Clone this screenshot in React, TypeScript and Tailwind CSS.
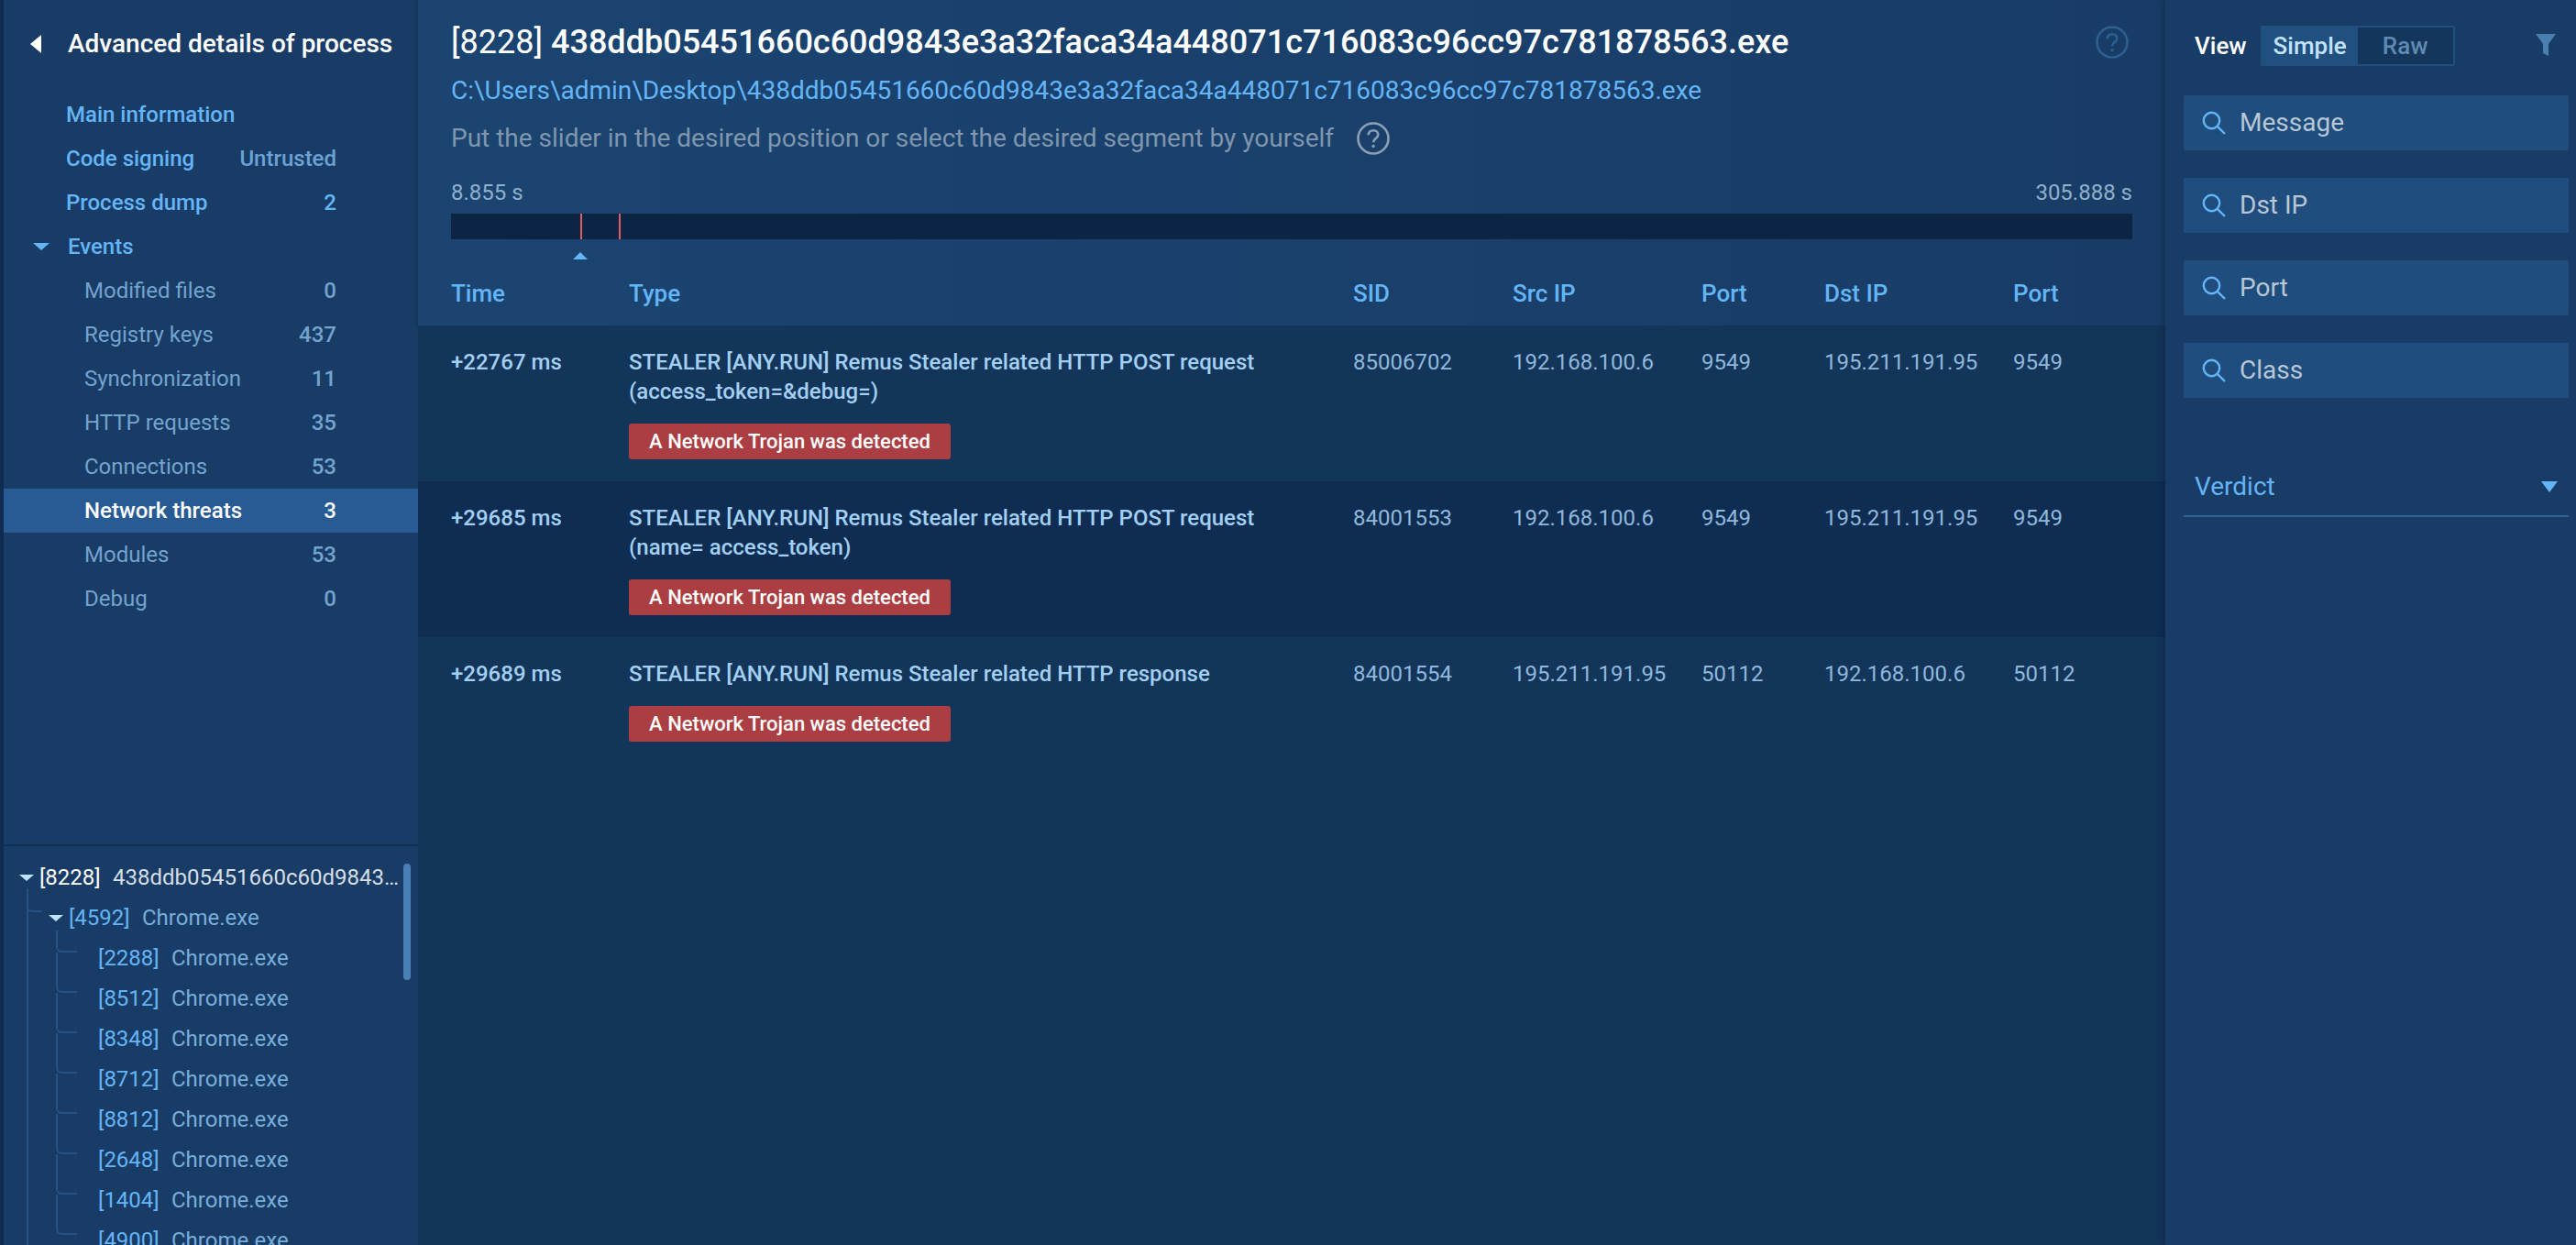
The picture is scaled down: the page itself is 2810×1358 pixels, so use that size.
const MAIN_ITEMS = [
  { label: "Main information", value: "" },
  { label: "Code signing", value: "Untrusted" },
  { label: "Process dump", value: "2" },
];

const EVENT_ITEMS = [
  { label: "Modified files", value: "0" },
  { label: "Registry keys", value: "437" },
  { label: "Synchronization", value: "11" },
  { label: "HTTP requests", value: "35" },
  { label: "Connections", value: "53" },
  { label: "Network threats", value: "3", active: true },
  { label: "Modules", value: "53" },
  { label: "Debug", value: "0" },
];

const CHILD_PIDS = ["2288", "8512", "8348", "8712", "8812", "2648", "1404", "4900"];

const COLUMNS = ["Time", "Type", "SID", "Src IP", "Port", "Dst IP", "Port"];

const THREATS = [
  {
    time: "+22767 ms",
    type: "STEALER [ANY.RUN] Remus Stealer related HTTP POST request (access_token=&debug=)",
    sid: "85006702",
    src: "192.168.100.6",
    srcPort: "9549",
    dst: "195.211.191.95",
    dstPort: "9549",
    rowClass: "h-[170px] bg-[#13355a]",
  },
  {
    time: "+29685 ms",
    type: "STEALER [ANY.RUN] Remus Stealer related HTTP POST request (name= access_token)",
    sid: "84001553",
    src: "192.168.100.6",
    srcPort: "9549",
    dst: "195.211.191.95",
    dstPort: "9549",
    rowClass: "h-[170px] bg-[#0f2d52]",
  },
  {
    time: "+29689 ms",
    type: "STEALER [ANY.RUN] Remus Stealer related HTTP response",
    sid: "84001554",
    src: "195.211.191.95",
    srcPort: "50112",
    dst: "192.168.100.6",
    dstPort: "50112",
    rowClass: "flex-1 bg-[#13355a]",
  },
];

const FILTERS = ["Message", "Dst IP", "Port", "Class"];

const GRID = "grid grid-cols-[194px_790px_174px_206px_134px_206px_1fr]";

function HelpIcon({ className }: { className: string }) {
  return (
    <svg viewBox="0 0 36 36" className={className} fill="none" stroke="currentColor">
      <circle cx="18" cy="18" r="16.5" strokeWidth="2.6" />
      <path d="M12.8 14.2c0-3 2.3-5 5.3-5s5.2 1.9 5.2 4.6c0 2-1 3.1-2.7 4.3-1.700 1.200-2.500 2.100-2.500 4.200" strokeWidth="2.600" />
      <circle cx="18.100" cy="26.500" r="1.700" fill="currentColor" stroke="none" />
    </svg>
  );
}

function SearchIcon() {
  return (
    <svg viewBox="0 0 26 26" className="h-[26px] w-[26px] shrink-0 text-[#64b5f6]" fill="none" stroke="currentColor" strokeWidth="2.400">
      <circle cx="10.500" cy="10.500" r="8.700" />
      <path d="M16.800 16.800 25 25" />
    </svg>
  );
}

function ChildRow({ pid, first }: { pid: string; first: boolean }) {
  return (
    <div className="relative flex h-[44px] items-center pl-[103px]">
      <span
        className={`absolute left-[57px] w-[23px] rounded-bl-[6px] border-b-2 border-l-2 border-[#255282] ${
          first ? "top-[-8px] h-[24px]" : "top-[-28px] h-[44px]"
        }`}
      />
      <span className="w-[80px] text-[#64b5f6]">[{pid}]</span>
      <span className="text-[#78aedb]">Chrome.exe</span>
    </div>
  );
}

function Sidebar() {
  return (
    <aside className="flex w-[456px] shrink-0 flex-col border-l-4 border-[#0e2b50] bg-[#193c66]">
      <div className="h-[923px] shrink-0 border-b-2 border-[#122f52]">
        <div className="flex h-[96px] items-center pl-[29px]">
          <span className="h-0 w-0 border-y-[10px] border-r-[12px] border-y-transparent border-r-white" />
          <span className="ml-[29px] text-[28px] font-medium text-white">Advanced details of process</span>
        </div>
        <div className="mt-[5px]">
          {MAIN_ITEMS.map((item) => (
            <div key={item.label} className="flex h-[48px] items-center justify-between pl-[68px] pr-[89px] text-[24px] font-medium text-[#64b5f6]">
              <span>{item.label}</span>
              <span className={item.value === "Untrusted" ? "text-[#6ba3d6]" : ""}>{item.value}</span>
            </div>
          ))}
          <div className="flex h-[48px] items-center pl-[32px] text-[24px] font-medium text-[#64b5f6]">
            <span className="h-0 w-0 border-x-[9px] border-t-[8px] border-x-transparent border-t-[#64b5f6]" />
            <span className="ml-[20px]">Events</span>
          </div>
          {EVENT_ITEMS.map((item) => (
            <div
              key={item.label}
              className={`flex h-[48px] items-center justify-between pl-[88px] pr-[89px] text-[24px] ${
                item.active ? "bg-[#285a94] font-medium text-white" : "text-[#73a3cf]"
              }`}
            >
              <span>{item.label}</span>
              <span className="font-medium">{item.value}</span>
            </div>
          ))}
        </div>
      </div>
      <div className="relative min-h-0 flex-1 overflow-hidden pt-[12px] text-[24px]">
        <span className="absolute left-[25px] top-[46px] h-full w-0 border-l-2 border-[#255282]" />
        <span className="absolute left-[25px] top-[50px] h-[22px] w-[17px] rounded-bl-[6px] border-b-2 border-l-2 border-[#255282]" />
        <span className="absolute right-[8px] top-[19px] h-[127px] w-[8px] rounded-full bg-[#4a7fb5]" />
        <div className="flex h-[44px] items-center pl-[17px]">
          <span className="h-0 w-0 border-x-[8px] border-t-[7px] border-x-transparent border-t-[#bfe3ff]" />
          <span className="ml-[6px] w-[80px] text-white">[8228]</span>
          <span className="w-[316px] truncate text-[#d5dfe8]">438ddb05451660c60d9843e3a32faca34a448071c716083c96cc97c781878563.exe</span>
        </div>
        <div className="flex h-[44px] items-center pl-[49px]">
          <span className="h-0 w-0 border-x-[8px] border-t-[7px] border-x-transparent border-t-[#bfe3ff]" />
          <span className="ml-[6px] w-[80px] text-[#64b5f6]">[4592]</span>
          <span className="text-[#78aedb]">Chrome.exe</span>
        </div>
        {CHILD_PIDS.map((pid, i) => (
          <ChildRow key={pid} pid={pid} first={i === 0} />
        ))}
      </div>
    </aside>
  );
}

function Timeline() {
  return (
    <>
      <div className="mt-[24px] flex justify-between text-[24px] leading-[30px] text-[#8fb0cc]">
        <span>8.855 s</span>
        <span>305.888 s</span>
      </div>
      <div className="relative mt-[8px] h-[28px] bg-[#0c2545]">
        <span className="absolute left-[141px] top-0 h-full w-[2px] bg-[#e25c5c]" />
        <span className="absolute left-[183px] top-0 h-full w-[2px] bg-[#e25c5c]" />
        <span className="absolute left-[133px] top-[42px] h-0 w-0 border-x-[8px] border-b-[8px] border-x-transparent border-b-[#64b5f6]" />
      </div>
    </>
  );
}

function Main() {
  return (
    <main className="flex min-w-0 flex-1 flex-col bg-[#13355a]">
      <header className="h-[355px] shrink-0 bg-gradient-to-r from-[#1b4471] to-[#183c66] pl-[36px] pr-[36px] pt-[22px] shadow-[0_2px_4px_rgba(8,24,48,0.4)]">
        <div className="flex h-[48px] items-center justify-between">
          <h1 className="whitespace-nowrap text-[36px] font-medium text-white">
            <span className="font-normal">[8228]</span> 438ddb05451660c60d9843e3a32faca34a448071c716083c96cc97c781878563.exe
          </h1>
          <HelpIcon className="mr-[4px] h-[36px] w-[36px] text-[#2c6093]" />
        </div>
        <div className="mt-[9px] text-[28px] leading-[40px] text-[#64b5f6]">
          C:\Users\admin\Desktop\438ddb05451660c60d9843e3a32faca34a448071c716083c96cc97c781878563.exe
        </div>
        <div className="mt-[12px] flex h-[40px] items-center text-[28px] text-[#7f96ad]">
          <span>Put the slider in the desired position or select the desired segment by yourself</span>
          <HelpIcon className="ml-[25px] h-[36px] w-[36px] text-[#8ba0b5]" />
        </div>
        <Timeline />
        <div className={`${GRID} mt-[43px] text-[26px] font-medium leading-[32px] text-[#64b5f6]`}>
          {COLUMNS.map((col, i) => (
            <span key={i}>{col}</span>
          ))}
        </div>
      </header>
      {THREATS.map((t) => (
        <div key={t.sid} className={`${GRID} ${t.rowClass} pl-[36px] pt-[24px] text-[24px] leading-[32px]`}>
          <span className="font-medium text-[#a3d0f2]">{t.time}</span>
          <div className="pr-[60px]">
            <div className="font-medium text-[#a3d0f2]">{t.type}</div>
            <div className="mt-[19px] flex h-[39px] w-[351px] items-center justify-center rounded-[3px] bg-[#ab3e42] text-[22px] font-medium text-white">
              A Network Trojan was detected
            </div>
          </div>
          <span className="text-[#8fb8dc]">{t.sid}</span>
          <span className="text-[#8fb8dc]">{t.src}</span>
          <span className="text-[#8fb8dc]">{t.srcPort}</span>
          <span className="text-[#8fb8dc]">{t.dst}</span>
          <span className="text-[#8fb8dc]">{t.dstPort}</span>
        </div>
      ))}
    </main>
  );
}

function FilterPanel() {
  return (
    <aside className="w-[448px] shrink-0 bg-[#193c66] pl-[20px] pr-[8px] shadow-[-3px_0_6px_rgba(8,24,48,0.3)]">
      <div className="flex h-[104px] items-start pt-[28px]">
        <span className="ml-[12px] flex h-[44px] items-center text-[26px] font-medium text-white">View</span>
        <div className="ml-[15px] flex h-[44px] w-[212px] rounded-[2px] border-2 border-[#20507f] text-[26px] font-medium">
          <span className="flex w-[104px] items-center justify-center bg-[#20507f] text-[#c4e2fa]">Simple</span>
          <span className="flex flex-1 items-center justify-center bg-[#14365c] text-[#5f8bb3]">Raw</span>
        </div>
        <svg viewBox="0 0 22 24" className="ml-[88px] mt-[9px] h-[24px] w-[22px] text-[#4a7fb0]" fill="currentColor">
          <path d="M0 0h22l-8 11v13l-6-3V11z" />
        </svg>
      </div>
      <div className="flex flex-col gap-[30px]">
        {FILTERS.map((name) => (
          <div key={name} className="flex h-[60px] items-center gap-[15px] rounded-[2px] bg-[#1f4d7d] pl-[20px] text-[28px] text-[#b8c7d6]">
            <SearchIcon />
            <span>{name}</span>
          </div>
        ))}
      </div>
      <div className="mt-[73px] flex h-[57px] items-center justify-between border-b-2 border-[#2f639a] px-[12px] pb-[7px] text-[28px] text-[#64b5f6]">
        <span>Verdict</span>
        <span className="h-0 w-0 border-x-[9px] border-t-[12px] border-x-transparent border-t-[#64b5f6]" />
      </div>
    </aside>
  );
}

export default function App() {
  return (
    <div className="flex h-[1358px] w-[2810px] overflow-hidden bg-[#13355a] font-['Roboto',sans-serif]">
      <Sidebar />
      <Main />
      <FilterPanel />
    </div>
  );
}
